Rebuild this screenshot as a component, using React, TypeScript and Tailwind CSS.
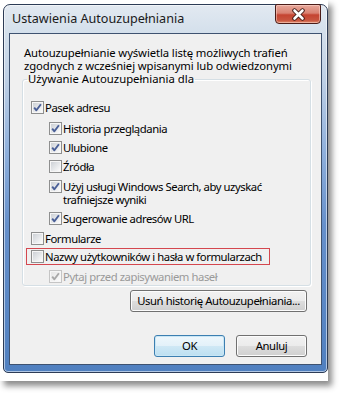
import { useId } from "react";

type BoxProps = { checked?: boolean; disabled?: boolean };

function CheckBox({ checked = false, disabled = false }: BoxProps) {
  const id = useId().replace(/:/g, "");
  const edge = disabled ? "#c5c5c5" : "#8e8f8f";
  const tick = disabled ? "#a9a9a9" : "#4a5f97";
  return (
    <svg width="13" height="13" viewBox="0 0 13 13" className="shrink-0">
      <defs>
        <linearGradient id={`in${id}`} x1="0" y1="0" x2="1" y2="1">
          <stop offset="0" stopColor={disabled ? "#e6e6e6" : "#cdd1d6"} />
          <stop offset="1" stopColor="#fbfbfb" />
        </linearGradient>
      </defs>
      <rect x="0.5" y="0.5" width="12" height="12" fill="#f6f6f6" stroke={edge} />
      <rect x="2" y="2" width="9" height="9" fill={`url(#in${id})`} />
      {checked && (
        <path
          d="M3.2 6.6 L5.4 9.3 L9.9 3.2"
          fill="none"
          stroke={tick}
          strokeWidth="1.9"
          strokeLinejoin="round"
        />
      )}
    </svg>
  );
}

type RowProps = BoxProps & { label: React.ReactNode; className?: string };

function Row({ checked, disabled, label, className = "" }: RowProps) {
  return (
    <div className={`flex items-start gap-[1px] ${className}`}>
      <div className="h-[13px] flex items-center">
        <CheckBox checked={checked} disabled={disabled} />
      </div>
      <span
        className={`leading-[13px] whitespace-nowrap tracking-[-0.45px] ${
          disabled ? "text-[#9a9a9a]" : "text-black"
        }`}
      >
        {label}
      </span>
    </div>
  );
}

function WinButton({ children, primary = false, className = "" }: { children: React.ReactNode; primary?: boolean; className?: string }) {
  return (
    <button
      type="button"
      className={`h-[22px] rounded-[3px] border whitespace-nowrap text-[11.3px] tracking-[-0.4px] leading-none text-black ${
        primary
          ? "border-[#3c7fb1] bg-[linear-gradient(180deg,#eef7fc_0%,#e3f1f9_50%,#cfe8f5_51%,#bcdff1_100%)] shadow-[inset_0_0_0_1px_#c9e6f5]"
          : "border-[#707070] bg-[linear-gradient(180deg,#f2f2f2_0%,#ebebeb_50%,#dddddd_51%,#cfcfcf_100%)] shadow-[inset_0_0_0_1px_#fcfcfc]"
      } ${className}`}
    >
      {children}
    </button>
  );
}

export default function App() {
  return (
    <div className="w-[341px] h-[394px] bg-white overflow-hidden font-['Noto_Sans',sans-serif] text-[11.3px]">
      <div className="w-[328px] h-[381px] bg-white pl-[3px] pt-[4px] shadow-[4px_5px_6px_rgba(0,0,0,0.45)]">
        <div className="w-[325px] h-[369px] flex flex-col rounded-t-[7px] rounded-b-[5px] border border-[#2d3c56] px-[5px] pb-[7px] bg-[linear-gradient(180deg,#e2e9f1_0%,#d3dfeb_8%,#bfd0e5_20%,#8fb0dc_40%,#6690cb_60%,#5080c0_100%)] shadow-[inset_0_0_0_1px_rgba(255,255,255,0.55)]">
          {/* title bar */}
          <div className="h-[28px] flex items-start justify-between">
            <span className="mt-[6px] ml-[3px] text-[12.6px] leading-[16px] text-[#1a1a1a]">Ustawienia Autouzupełniania</span>
            <div className="w-[46px] h-[20px] mr-[1px] -mt-[1px] rounded-b-[4px] rounded-t-[2px] border border-[#4a1c18] bg-[linear-gradient(180deg,#e8a89b_0%,#d98272_45%,#c54431_55%,#c8553f_85%,#e08a6a_100%)] shadow-[inset_0_0_0_1px_rgba(255,220,210,0.5)] flex items-center justify-center">
              <svg width="15" height="13" viewBox="0 0 15 13">
                <path d="M3.5 2.5 L11.5 10.5 M11.5 2.5 L3.5 10.5" stroke="#3a1410" strokeWidth="4.4" strokeLinecap="round" />
                <path d="M3.5 2.5 L11.5 10.5 M11.5 2.5 L3.5 10.5" stroke="#ffffff" strokeWidth="2.6" strokeLinecap="round" />
              </svg>
            </div>
          </div>
          {/* client area */}
          <div className="flex-1 flex flex-col border border-[#3e5270] bg-[#f0f0f0] pt-[12px]">
            <p className="pl-[14px] leading-[13px] text-black whitespace-nowrap tracking-[-0.1px]">
              Autouzupełnianie wyświetla listę możliwych trafień
              <br />
              zgodnych z wcześniej wpisanymi lub odwiedzonymi
            </p>
            <fieldset className="ml-[12px] mr-[10px] h-[214px] border border-[#d5dfe5] rounded-[3px] shadow-[inset_1px_1px_0_#ffffff,1px_1px_0_#ffffff]">
              <legend className="ml-[4px] px-[1px] leading-[14px] text-black">Używanie Autouzupełniania dla</legend>
              <div className="flex flex-col pl-[8px] pt-[15px]">
                <Row checked label="Pasek adresu" />
                <div className="flex flex-col pl-[18px]">
                  <Row checked label="Historia przeglądania" className="mt-[8px]" />
                  <Row checked label="Ulubione" className="mt-[6px]" />
                  <Row label="Źródła" className="mt-[6px]" />
                  <Row
                    checked
                    label={
                      <>
                        Użyj usługi Windows Search, aby uzyskać
                        <br />
                        trafniejsze wyniki
                      </>
                    }
                    className="mt-[7px]"
                  />
                  <Row checked label="Sugerowanie adresów URL" className="mt-[6px]" />
                </div>
                <Row label="Formularze" className="mt-[7px]" />
                <div className="mt-[3px] -ml-[5px] w-[244px] h-[17px] flex items-center pl-[4px] border-[1.5px] border-[#d4474f]">
                  <Row label="Nazwy użytkowników i hasła w formularzach" />
                </div>
                <Row checked disabled label="Pytaj przed zapisywaniem haseł" className="mt-[5px] pl-[18px]" />
              </div>
            </fieldset>
            <div className="flex justify-end pr-[14px] mt-[4px]">
              <WinButton className="w-[177px]">Usuń historię Autouzupełniania...</WinButton>
            </div>
            <div className="flex justify-end gap-[11px] pr-[14px] mt-[23px]">
              <WinButton primary className="w-[71px]">OK</WinButton>
              <WinButton className="w-[71px]">Anuluj</WinButton>
            </div>
          </div>
        </div>
      </div>
    </div>
  );
}
